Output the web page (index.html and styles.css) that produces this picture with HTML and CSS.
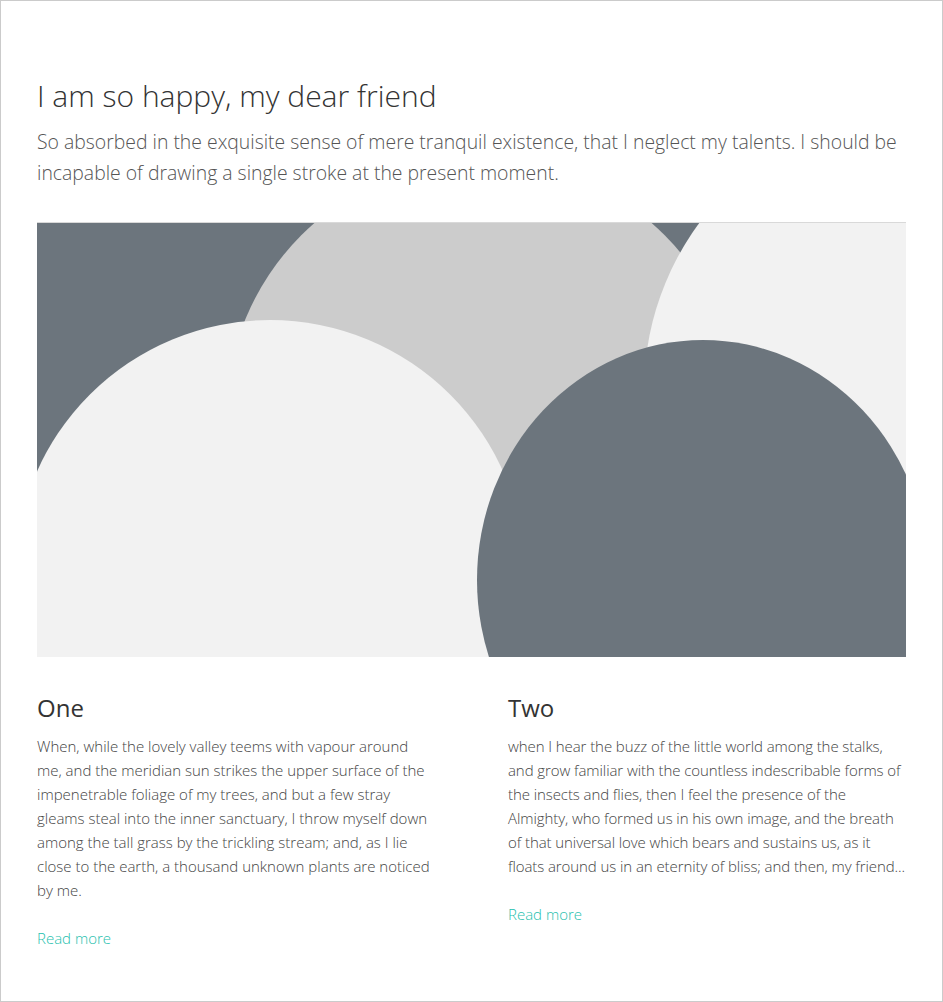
FILE: index.html
```html
<!DOCTYPE html>
<html lang="en">
<head>
<meta charset="utf-8">
<title>I am so happy, my dear friend</title>
<link rel="stylesheet" href="styles.css">
</head>
<body>
<div class="page">
  <header class="intro">
    <h1 class="title">I am so happy, my dear friend</h1>
    <p class="lead">So absorbed in the exquisite sense of mere tranquil existence, that I neglect my talents. I should be incapable of drawing a single stroke at the present moment.</p>
  </header>

  <div class="hero">
    <svg class="hero-art" viewBox="0 0 869 434" preserveAspectRatio="none" aria-hidden="true">
      <rect x="0" y="0" width="869" height="434" fill="#6c757d"/>
      <circle cx="446" cy="194" r="257" fill="#cccccc"/>
      <circle cx="890" cy="168" r="283" fill="#f2f2f2"/>
      <circle cx="233" cy="352" r="255" fill="#f2f2f2"/>
      <ellipse cx="666" cy="357" rx="226" ry="240" fill="#6c757d"/>
    </svg>
  </div>

  <div class="cols">
    <article class="col">
      <h2 class="col-title">One</h2>
      <p class="col-text">When, while the lovely valley teems with vapour around me, and the meridian sun strikes the upper surface of the impenetrable foliage of my trees, and but a few stray gleams steal into the inner sanctuary, I throw myself down among the tall grass by the trickling stream; and, as I lie close to the earth, a thousand unknown plants are noticed by me.</p>
      <a class="more" href="#">Read more</a>
    </article>
    <article class="col">
      <h2 class="col-title">Two</h2>
      <p class="col-text col-text--tight">when I hear the buzz of the little world among the stalks, and grow familiar with the countless indescribable forms of the insects and flies, then I feel the presence of the Almighty, who formed us in his own image, and the breath of that universal love which bears and sustains us, as it floats around us in an eternity of bliss; and then, my friend...</p>
      <a class="more" href="#">Read more</a>
    </article>
  </div>
</div>
</body>
</html>
```

FILE: styles.css
```css
html, body {
  margin: 0;
  padding: 0;
  background: #ffffff;
}

body {
  font-family: "Open Sans", "Segoe UI", "Liberation Sans", sans-serif;
  font-weight: 300;
  color: #444444;
}

.page {
  box-sizing: border-box;
  height: 1002px;
  border: 1px solid #cbcbcb;
  padding: 75px 36px 0 36px;
}

.title {
  margin: 0;
  font-size: 30px;
  line-height: 40px;
  font-weight: 300;
  color: #333333;
}

.lead {
  margin: 10px 0 0 0;
  font-size: 19.4px;
  line-height: 31px;
  font-weight: 300;
  color: #555555;
}

.hero {
  margin-top: 34px;
  border-top: 1px solid #d9d9d9;
  height: 434px;
}

.hero-art {
  display: block;
  width: 100%;
  height: 434px;
}

.cols {
  display: grid;
  grid-template-columns: 1fr 1fr;
  column-gap: 73px;
  margin-top: 36px;
}

.col-title {
  margin: 0;
  font-size: 24px;
  line-height: 29px;
  font-weight: 400;
  color: #333333;
}

.col-text {
  margin: 12px 0 24px 0;
  font-size: 15px;
  line-height: 24px;
  color: #444444;
}

.col-text--tight {
  letter-spacing: -0.08px;
}

.more {
  display: block;
  font-size: 15px;
  line-height: 24px;
  color: #26bfae;
  text-decoration: none;
}
```
